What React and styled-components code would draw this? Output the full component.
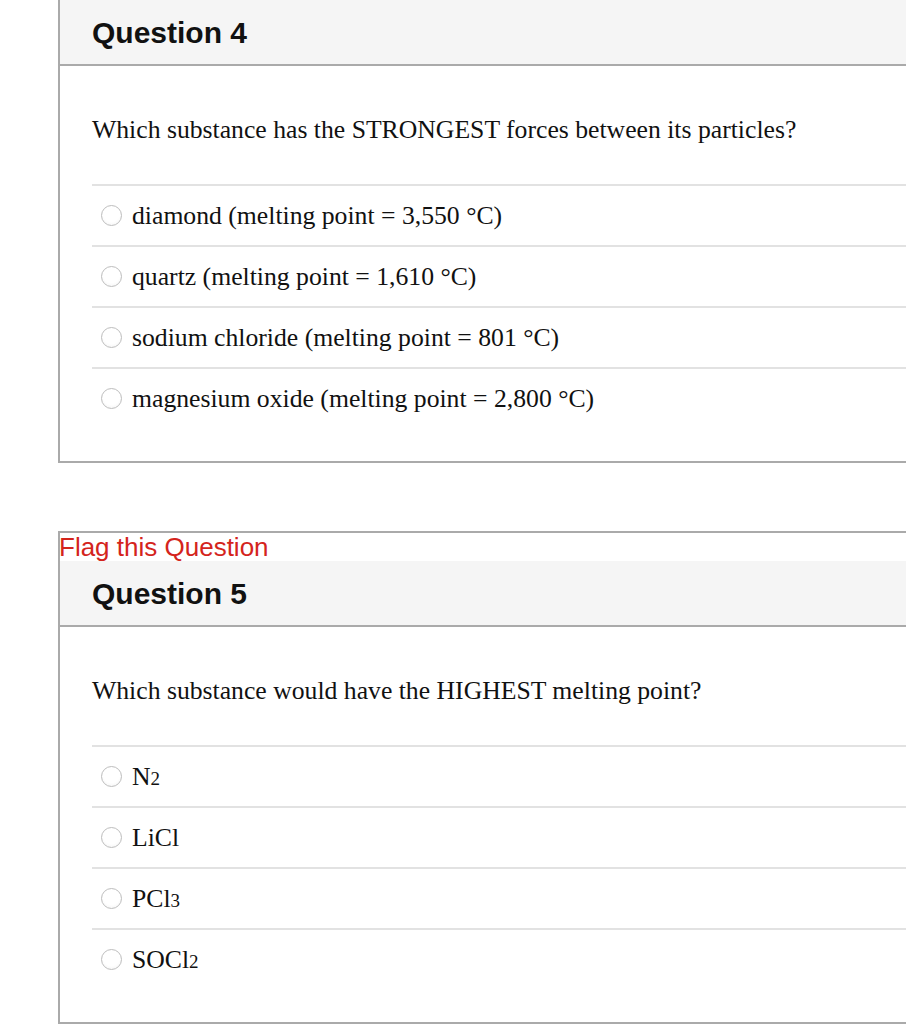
import styled, { createGlobalStyle } from "styled-components";

const GlobalStyle = createGlobalStyle`
    body {
        margin: 0;
        background: #FFFFFF;
        overflow: hidden;
    }
`;

const questions = [
    {
        number: 4,
        text: "Which substance has the STRONGEST forces between its particles?",
        options: [
            ["diamond (melting point = 3,550 °C)"],
            ["quartz (melting point = 1,610 °C)"],
            ["sodium chloride (melting point = 801 °C)"],
            ["magnesium oxide (melting point = 2,800 °C)"],
        ],
    },
    {
        number: 5,
        text: "Which substance would have the HIGHEST melting point?",
        options: [
            ["N", "2"],
            ["LiCl"],
            ["PCl", "3"],
            ["SOCl", "2"],
        ],
    },
];

function App() {
    return (
        <Page>
            <GlobalStyle />
            {questions.map((q) => (
                <Card key={q.number}>
                    <Flag>Flag this Question</Flag>
                    <Header>Question {q.number}</Header>
                    <Body>
                        <QuestionText>{q.text}</QuestionText>
                        {q.options.map(([label, sub]) => (
                            <Option key={label + (sub || "")}>
                                <Radio />
                                <span>
                                    {label}
                                    {sub && <Sub>{sub}</Sub>}
                                </span>
                            </Option>
                        ))}
                    </Body>
                </Card>
            ))}
        </Page>
    );
}

export default App;

const Page = styled.div`
    width: 906px;
    padding-left: 58px;
    box-sizing: border-box;
    margin-top: -30px;
    display: flex;
    flex-direction: column;
    gap: 68px;
`;

const Card = styled.div`
    border: 2px solid #AAAAAA;
    border-right: none;
    width: 860px;
`;

const Flag = styled.div`
    font-family: "Liberation Sans", Arial, sans-serif;
    font-size: 26px;
    line-height: 28px;
    color: #D4241C;
    margin-left: -1px;
`;

const Header = styled.div`
    height: 66px;
    display: flex;
    align-items: center;
    padding: 2px 0 0 32px;
    box-sizing: border-box;
    background: #F5F5F5;
    border-bottom: 2px solid #AAAAAA;
    font-family: "Liberation Sans", Arial, sans-serif;
    font-weight: 700;
    font-size: 30px;
    color: #111111;
`;

const Body = styled.div`
    padding: 0 0 33px 32px;
    font-family: "Liberation Serif", "Times New Roman", serif;
    color: #111111;
`;

const QuestionText = styled.p`
    margin: 0;
    padding: 50px 0 40px 0;
    font-size: 25.7px;
    line-height: 28px;
`;

const Option = styled.div`
    display: flex;
    align-items: center;
    gap: 10px;
    height: 59px;
    padding-left: 9px;
    border-top: 2px solid #E2E2E2;
    font-size: 25.7px;
`;

const Radio = styled.span`
    width: 21px;
    height: 21px;
    box-sizing: border-box;
    border-radius: 50%;
    border: 1px solid #BDBDBD;
    background: radial-gradient(circle at 50% 40%, #FFFFFF 55%, #F0F0F0 100%);
    flex-shrink: 0;
`;

const Sub = styled.span`
    font-size: 19px;
`;
